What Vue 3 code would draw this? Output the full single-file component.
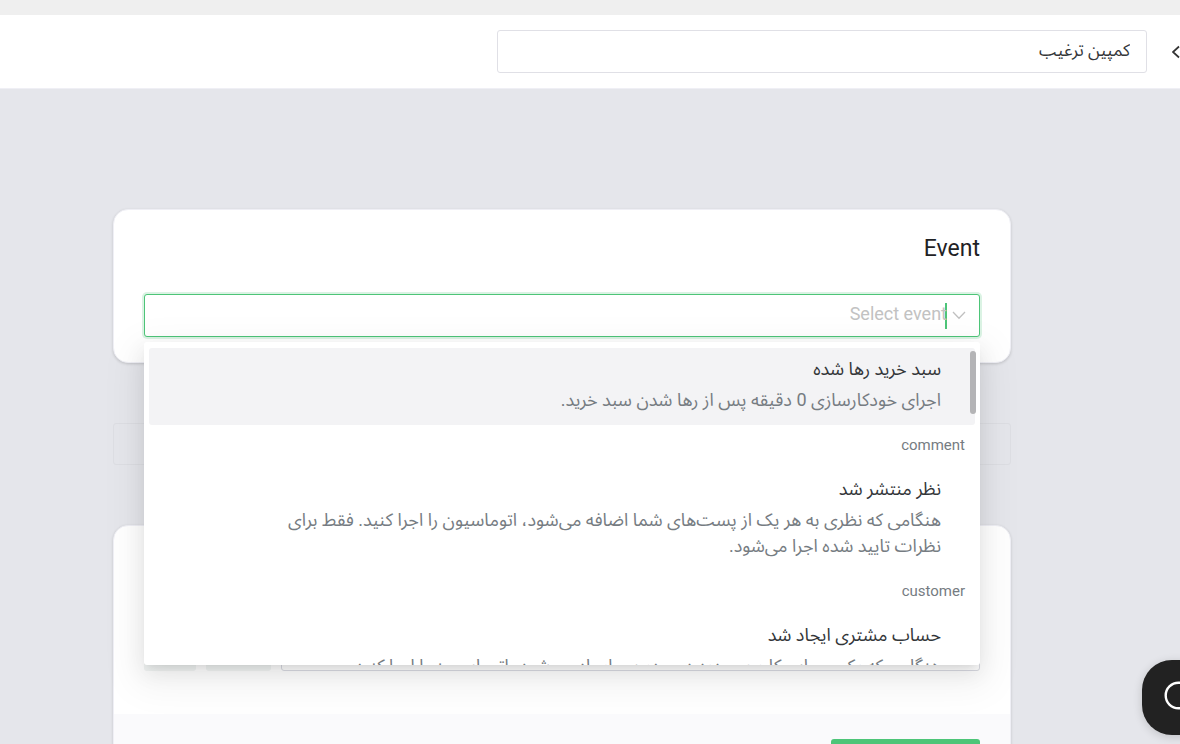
<script setup>
import { ref } from 'vue'

const campaign = ref('کمپین ترغیب')
const query = ref('')
const groups = [
  {
    label: '',
    title: 'سبد خرید رها شده',
    lines: ['اجرای خودکارسازی 0 دقیقه پس از رها شدن سبد خرید.'],
    active: true
  },
  {
    label: 'comment',
    title: 'نظر منتشر شد',
    lines: [
      'هنگامی که نظری به هر یک از پست‌های شما اضافه می‌شود، اتوماسیون را اجرا کنید. فقط برای',
      'نظرات تایید شده اجرا می‌شود.'
    ]
  },
  {
    label: 'customer',
    title: 'حساب مشتری ایجاد شد',
    lines: ['هنگامی که یک حساب کاربری جدید در وردپرس ایجاد می‌شود، اتوماسیون را اجرا کنید.']
  }
]
</script>

<template>
  <div class="page" dir="rtl" lang="fa">
    <div class="strip"></div>
    <header class="topbar">
      <button class="back" aria-label="بازگشت">
        <svg width="8" height="14" viewBox="0 0 8 14" fill="none" stroke="#333" stroke-width="1.7">
          <path d="M7 1.5 1 7l6 5.5" />
        </svg>
      </button>
      <input v-model="campaign" class="name" type="text" aria-label="نام کمپین" />
    </header>

    <main class="content">
      <section class="card event">
        <label class="heading" for="event" dir="ltr">Event</label>
        <div class="select">
          <svg class="chevron" width="14" height="9" viewBox="0 0 14 9" fill="none" stroke="#c0c0c0" stroke-width="1.3">
            <path d="M1 1l6 6.3L13 1" />
          </svg>
          <span class="caret"></span>
          <input id="event" v-model="query" type="text" role="combobox" aria-expanded="true" aria-controls="event-list" placeholder="Select event" />
          <div id="event-list" class="menu" role="listbox">
            <div class="scroll">
              <template v-for="g in groups" :key="g.title">
                <div v-if="g.label" class="group">{{ g.label }}</div>
                <div class="option" :class="{ active: g.active }" role="option" :aria-selected="!!g.active">
                  <div class="title">{{ g.title }}</div>
                  <div v-for="l in g.lines" :key="l" class="desc">{{ l }}</div>
                </div>
              </template>
            </div>
            <span class="thumb"></span>
          </div>
        </div>
      </section>

      <button class="ghost" disabled aria-label="افزودن"></button>

      <section class="card action">
        <div class="row">
          <input class="field" type="text" aria-label="مقدار" />
          <button class="tool wide" aria-label="ویرایش"></button>
          <button class="tool" aria-label="حذف"></button>
        </div>
        <footer class="foot"><button class="save" aria-label="ذخیره"></button></footer>
      </section>
    </main>

    <button class="chat" aria-label="گفتگو">
      <svg width="34" height="34" viewBox="0 0 34 34" fill="none" stroke="#fff" stroke-width="2.4">
        <circle cx="15.5" cy="14.5" r="12.8" />
      </svg>
    </button>
  </div>
</template>

<style>
body {
  background: #e5e6eb;
}
</style>

<style scoped>
* {
  box-sizing: border-box;
}
.page {
  height: 100vh;
  overflow: hidden;
  position: relative;
  background: #e5e6eb;
  color: #333639;
  font-family: Roboto, "Noto Sans Arabic", "DejaVu Sans", sans-serif;
  font-size: 17px;
}
button,
input {
  font: inherit;
  color: inherit;
  margin: 0;
  padding: 0;
  border: 0;
  background: none;
  outline: none;
}
.strip {
  height: 15px;
  background: #efefef;
}
.topbar {
  display: flex;
  align-items: center;
  gap: 25px;
  height: 74px;
  background: #fff;
  border-bottom: 1px solid #efeff5;
}
.back {
  width: 8px;
  height: 24px;
  display: flex;
  align-items: center;
}
.name {
  width: 650px;
  height: 43px;
  padding: 0 16px 2px;
  border: 1px solid #e0e0e6;
  border-radius: 3px;
  background: #fff;
}
.content {
  display: flex;
  flex-direction: column;
  gap: 60px;
  padding: 120px 169px 0 113px;
}
.card {
  border: 1px solid #efeff5;
  border-radius: 15px;
  background: #fff;
  box-shadow: 0 1px 3px rgba(0, 0, 0, 0.16);
}
.event {
  position: relative;
  z-index: 2;
  padding: 24px 30px 25px;
}
.heading {
  display: block;
  margin-bottom: 30px;
  font-size: 23px;
  line-height: 30px;
  color: #1f2225;
  text-align: right;
}
.select {
  position: relative;
  display: flex;
  align-items: center;
  height: 43px;
  padding: 0 13px;
  border: 1px solid #4dc578;
  border-radius: 3px;
  box-shadow: 0 0 0 2px rgba(77, 197, 120, 0.2);
  background: #fff;
}
.select input {
  flex: 1;
  height: 41px;
  padding-bottom: 4px;
  font-size: 18px;
}
.select input::placeholder {
  color: #c2c2c2;
  opacity: 1;
}
.caret {
  width: 2px;
  height: 26px;
  margin-right: 5px;
  margin-left: -2px;
  background: #4dc578;
}
.menu {
  position: absolute;
  top: 47px;
  left: -1px;
  right: -1px;
  border-radius: 3px;
  background: #fff;
  box-shadow: 0 4px 8px -5px rgba(0, 0, 0, 0.12), 0 8px 21px rgba(0, 0, 0, 0.08), 0 12px 37px 11px rgba(0, 0, 0, 0.05);
}
.scroll {
  height: 323px;
  padding: 6px 5px 0;
  overflow: hidden;
}
.option {
  padding: 8px 34px 12px;
  border-radius: 3px;
  font-size: 18px;
  line-height: 26px;
  white-space: nowrap;
}
.active {
  background: #f3f3f5;
}
.title {
  margin-bottom: 5px;
}
.desc {
  color: #767c82;
}
.group {
  height: 43px;
  padding: 0 10px;
  font-size: 15px;
  line-height: 40px;
  color: #767c82;
}
.thumb {
  position: absolute;
  top: 9px;
  right: 4px;
  width: 6px;
  height: 63px;
  border-radius: 3px;
  background: #b4b4b6;
}
.ghost {
  height: 42px;
  border: 1px solid #dddee3;
  border-radius: 3px;
}
.action {
  overflow: hidden;
}
.row {
  display: flex;
  gap: 10px;
  padding: 102px 30px 43px;
}
.field {
  flex: 1;
  height: 43px;
  border: 1px solid #d9dae2;
  border-radius: 3px;
}
.tool {
  width: 52px;
  height: 43px;
  border-radius: 3px;
  background: #f2f5f4;
}
.wide {
  width: 65px;
}
.foot {
  padding: 25px 30px;
  background: #fafafc;
}
.save {
  display: block;
  width: 149px;
  height: 43px;
  border-radius: 3px;
  background: #4dc578;
}
.chat {
  position: absolute;
  right: -37px;
  bottom: 9px;
  width: 75px;
  height: 75px;
  display: flex;
  align-items: center;
  justify-content: center;
  border-radius: 30px;
  background: #222;
  box-shadow: 0 2px 10px rgba(0, 0, 0, 0.16);
}
</style>
